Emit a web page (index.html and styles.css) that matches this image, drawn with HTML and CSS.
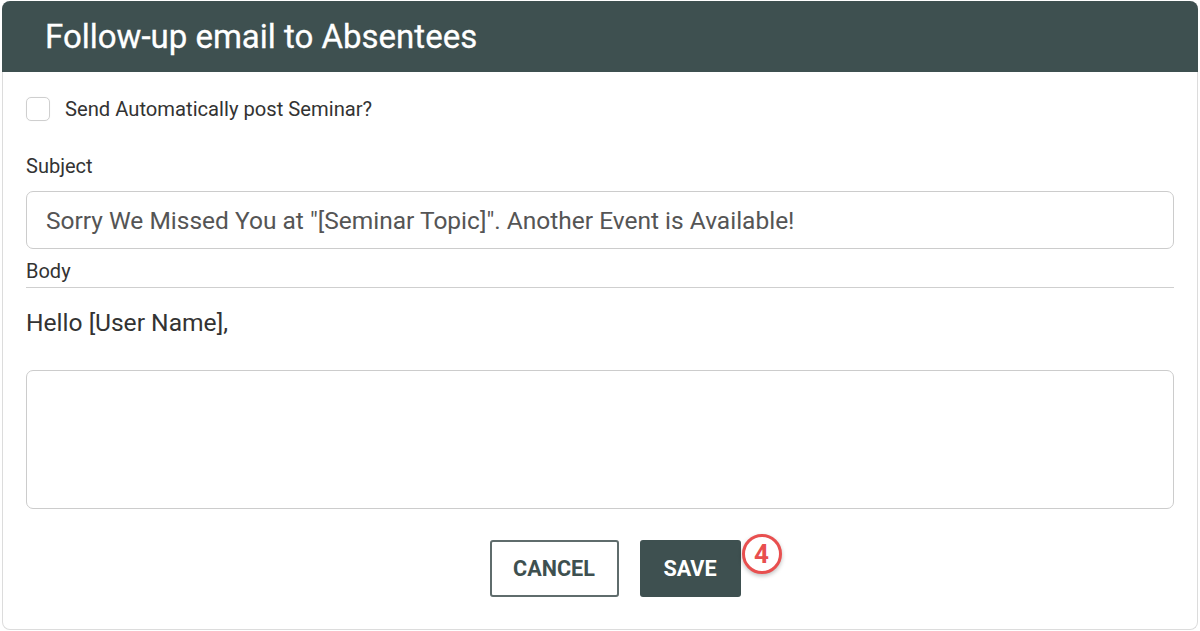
FILE: index.html
```html
<!DOCTYPE html>
<html lang="en">
<head>
<meta charset="utf-8">
<title>Follow-up email to Absentees</title>
<link rel="stylesheet" href="styles.css">
</head>
<body>
<div class="card">
  <div class="header"><h1 class="title">Follow-up email to Absentees</h1></div>
  <div class="content">
    <label class="check-row">
      <span class="checkbox"></span>
      <span class="check-label">Send Automatically post Seminar?</span>
    </label>
    <div class="field-label subject-label">Subject</div>
    <div class="input">Sorry We Missed You at "[Seminar Topic]". Another Event is Available!</div>
    <div class="field-label body-label">Body</div>
    <div class="greeting">Hello [User Name],</div>
    <div class="textarea"></div>
    <div class="actions">
      <button class="btn btn-outline">CANCEL</button>
      <button class="btn btn-primary">SAVE<span class="badge">4</span></button>
    </div>
  </div>
</div>
</body>
</html>
```
FILE: styles.css
```css
html, body {
  margin: 0;
  padding: 0;
  background: #ffffff;
}
body {
  padding: 1px 2px 0;
  font-family: Roboto, "Liberation Sans", Arial, sans-serif;
  color: #333;
}
.card {
  height: 629px;
  box-sizing: border-box;
  border: 1px solid #dcdcdc;
  border-top: none;
  border-radius: 8px;
  display: flex;
  flex-direction: column;
}
.header {
  background: #3e5050;
  height: 71px;
  border-radius: 8px 8px 0 0;
  display: flex;
  align-items: center;
  padding-left: 43px;
  margin: 0 -1px;
}
.title {
  margin: 0;
  color: #fff;
  font-size: 33px;
  font-weight: 400;
  -webkit-text-stroke: 0.3px #fff;
}
.content {
  padding: 0 23px;
  display: flex;
  flex-direction: column;
}
.check-row {
  margin-top: 25px;
  display: flex;
  align-items: center;
  height: 24px;
}
.checkbox {
  width: 22px;
  height: 22px;
  border: 1px solid #cfcfcf;
  border-radius: 5px;
  box-shadow: 0 0 1px rgba(0,0,0,0.08);
}
.check-label {
  margin-left: 15px;
  font-size: 20.2px;
  color: #333;
}
.field-label {
  font-size: 20px;
  line-height: 22px;
  color: #333;
}
.subject-label {
  margin-top: 34px;
}
.input {
  margin-top: 14px;
  height: 58px;
  box-sizing: border-box;
  border: 1px solid #cccccc;
  border-radius: 7px;
  padding-left: 19px;
  display: flex;
  align-items: center;
  font-size: 24.5px;
  color: #555;
}
.body-label {
  margin-top: 11px;
  padding-bottom: 5px;
  border-bottom: 1px solid #cfcfcf;
}
.greeting {
  margin-top: 22px;
  font-size: 24.6px;
  line-height: 26px;
  color: #333;
}
.textarea {
  margin-top: 34px;
  height: 139px;
  box-sizing: border-box;
  border: 1px solid #cccccc;
  border-radius: 7px;
}
.actions {
  margin-top: 31px;
  display: flex;
  justify-content: center;
  gap: 21px;
  padding-left: 30px;
}
.btn {
  height: 57px;
  box-sizing: border-box;
  border-radius: 3px;
  font-family: Roboto, "Liberation Sans", Arial, sans-serif;
  font-size: 21.6px;
  font-weight: 700;
  cursor: pointer;
  position: relative;
  padding: 0;
}
.btn-outline {
  width: 129px;
  background: #fff;
  border: 2px solid #5f6c6c;
  color: #3e5050;
}
.btn-primary {
  width: 101px;
  background: #3e5050;
  border: none;
  color: #fff;
}
.badge {
  position: absolute;
  left: 102px;
  top: -6px;
  width: 40px;
  height: 40px;
  box-sizing: border-box;
  border: 3px solid #e84f4f;
  border-radius: 50%;
  background: #fff;
  color: #e84f4f;
  font-size: 26px;
  font-weight: 700;
  display: flex;
  align-items: center;
  justify-content: center;
  box-shadow: 0 2px 4px rgba(0,0,0,0.25);
}
```
